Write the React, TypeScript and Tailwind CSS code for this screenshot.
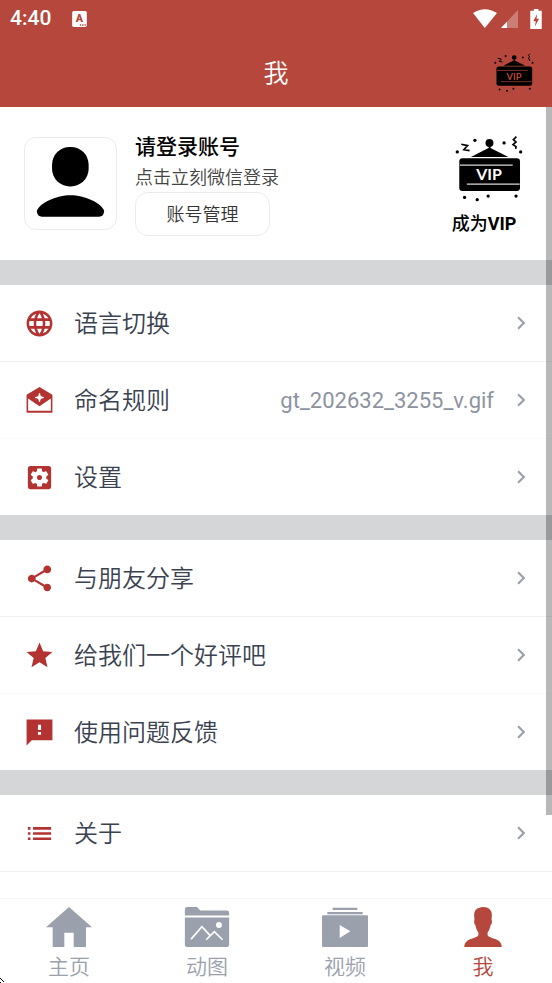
import type { ReactNode } from 'react';
import {
  MdChevronRight,
  MdLanguage,
  MdList,
  MdSettingsApplications,
  MdShare,
  MdStar,
} from 'react-icons/md';

function VipSign({ className, accent }: { className: string; accent: string }) {
  return (
    <svg viewBox="75 75 235 200" className={className} aria-hidden="true">
      <circle cx="209" cy="98" r="12" />
      <path d="M207 104 H212 V116 H207 Z" />
      <path d="M209 112 L266 140 H153 Z" />
      <rect x="118" y="144" width="183" height="99" rx="10" />
      <path d="M120 165 H279 M141 222 H300" stroke={accent} strokeWidth="4" opacity="0.85" />
      <text
        x="208"
        y="211"
        textAnchor="middle"
        fontSize="48"
        fontWeight="700"
        fill={accent}
        className="font-[Lato,sans-serif]"
      >
        VIP
      </text>
      <path
        d="M124 102 L143 106 L132 118 L149 121 M290 79 L281 88 L289 95 L280 103 L289 109 L288 116"
        fill="none"
        stroke="black"
        strokeWidth="5"
      />
      <circle cx="112" cy="125" r="5" />
      <circle cx="165" cy="90" r="5" />
      <circle cx="253" cy="98" r="5" />
      <circle cx="303" cy="125" r="5" />
      <circle cx="134" cy="262" r="5" />
      <circle cx="172" cy="269" r="5" />
      <circle cx="205" cy="258" r="5" />
      <circle cx="289" cy="258" r="5" />
    </svg>
  );
}

function NamingIcon() {
  return (
    <svg viewBox="0 0 24 24" className="size-[31px]" aria-hidden="true">
      <path d="M12 1.6 L22 7.6 V21.5 H2 V7.6 Z" fill="currentColor" />
      <path d="M3.2 10.4 L12 16.4 L20.8 10.4 V20 H3.2 Z" fill="white" />
      <path
        d="M12 6.2 L12.9 8.8 L15.5 9.7 L12.9 10.6 L12 13.2 L11.1 10.6 L8.5 9.7 L11.1 8.8 Z"
        fill="white"
        stroke="white"
        strokeWidth="0.4"
      />
    </svg>
  );
}

function FeedbackIcon() {
  return (
    <svg viewBox="0 0 24 24" className="size-[31px]" fill="currentColor" aria-hidden="true">
      <path
        fillRule="evenodd"
        d="M2 2 H22 V18 H6 L2 22 Z M10.8 6 V10 H13.2 V6 Z M10.8 11.6 V13.8 H13.2 V11.6 Z"
      />
    </svg>
  );
}

function StatusBar() {
  return (
    <div className="flex h-[37px] items-center px-[10px]">
      <span className="text-[21px] font-medium leading-none">4:40</span>
      <svg viewBox="0 0 44 48" className="ml-[21px] h-4 w-[15px]" aria-hidden="true">
        <rect width="44" height="48" rx="5" fill="white" />
        <text x="22" y="34" textAnchor="middle" fontSize="32" fontWeight="900" fill="#b5473c">
          A
        </text>
        <path d="M23 42 h4 M30 42 h4 M37 42 h4" stroke="#b5473c" strokeWidth="4" />
      </svg>
      <svg viewBox="219 26 71 56" className="ml-auto h-[19px] w-6" fill="white" aria-hidden="true">
        <path d="M219 38 Q254 15 290 38 L254 82 Z" />
      </svg>
      <svg viewBox="303 29 51 54" className="ml-1 h-[18px] w-[17px]" fill="white" aria-hidden="true">
        <path d="M354 29 V83 H303 Z" opacity="0.3" />
        <path d="M321 64 V83 H303 Z" />
      </svg>
      <svg viewBox="391 23 35 61" className="ml-3 h-5 w-3" aria-hidden="true">
        <path d="M402 23 H416 V28 H426 V84 H391 V28 H402 Z" fill="white" />
        <path d="M412 38 L400 60 H408 L405 76 L418 53 H410 Z" fill="#b5473c" />
      </svg>
    </div>
  );
}

function Row({ icon, label, value }: { icon: ReactNode; label: string; value?: string }) {
  return (
    <li className="border-b border-[#f0f1f3] last:border-b-0 even:border-[#fafafb]">
      <button
        type="button"
        className="flex h-[76px] w-full items-center pl-6 pr-[18px] text-left text-2xl text-[#3a4250]"
      >
        <span className="mr-[19px] text-[31px] text-[#b33332]">{icon}</span>
        <span className="pt-0.5 font-[350]">{label}</span>
        <span className="ml-auto mr-3.5 pt-0.5 text-[22px] text-[#8c939f]">{value}</span>
        <MdChevronRight className="text-[26px] text-[#9aa1ac]" />
      </button>
    </li>
  );
}

function Gap() {
  return <div className="h-[25px] bg-[#d4d6d8]" />;
}

function Tab({ label, active, children }: { label: string; active?: boolean; children: ReactNode }) {
  return (
    <button
      type="button"
      aria-current={active ? 'page' : undefined}
      className={`flex flex-1 flex-col items-center pt-2 ${active ? 'text-[#b5473c]' : 'text-[#9aa1ac]'}`}
    >
      {children}
      <span className="mt-[5px] text-[21px] font-[350] leading-[31px]">{label}</span>
    </button>
  );
}

export default function App() {
  return (
    <div className="relative flex h-screen flex-col overflow-hidden bg-white font-[Roboto,'Noto_Sans_CJK_SC',sans-serif]">
      <header className="bg-[#b5473c] text-white">
        <StatusBar />
        <div className="grid h-[70px] grid-cols-[1fr_auto_1fr] items-center px-[18px]">
          <h1 className="col-start-2 pt-1 text-[25px] font-[350]">我</h1>
          <button type="button" aria-label="VIP" className="justify-self-end">
            <VipSign className="h-[39px] w-[46px]" accent="#b5473c" />
          </button>
        </div>
      </header>

      <main className="relative min-h-0 flex-1 overflow-hidden">
        <section className="flex items-center py-6 pl-6 pr-[29px]">
          <div className="size-[93px] rounded-xl border border-[#ebebeb]">
            <svg viewBox="74 84 276 276" className="size-full" aria-hidden="true">
              <rect x="156" y="111" width="111" height="120" rx="54" />
              <path d="M110 305 C120 280 170 258 212 258 C254 258 304 280 314 305 Q314 323 298 323 H126 Q110 323 110 305 Z" />
            </svg>
          </div>
          <div className="ml-[18px] flex flex-col items-start">
            <h2 className="text-[21px] font-medium leading-[33px] text-black">请登录账号</h2>
            <p className="text-lg font-[350] leading-7 text-[#444]">点击立刻微信登录</p>
            <button
              type="button"
              className="h-11 w-[135px] rounded-[13px] border border-[#ebebeb] pt-0.5 text-lg font-[350] text-[#333]"
            >
              账号管理
            </button>
          </div>
          <button type="button" className="ml-auto flex flex-col items-center self-end">
            <VipSign className="h-[67px] w-[78px]" accent="white" />
            <span className="mt-2.5 text-lg font-medium leading-6 text-black">
              成为<b>VIP</b>
            </span>
          </button>
        </section>
        <Gap />
        <ul>
          <Row icon={<MdLanguage />} label="语言切换" />
          <Row icon={<NamingIcon />} label="命名规则" value="gt_202632_3255_v.gif" />
          <Row icon={<MdSettingsApplications />} label="设置" />
        </ul>
        <Gap />
        <ul>
          <Row icon={<MdShare />} label="与朋友分享" />
          <Row icon={<MdStar />} label="给我们一个好评吧" />
          <Row icon={<FeedbackIcon />} label="使用问题反馈" />
        </ul>
        <Gap />
        <ul className="border-b border-[#f0f1f3]">
          <Row icon={<MdList />} label="关于" />
        </ul>
        <div className="absolute right-0 top-0 h-[89.5%] w-1.5 bg-black/28" />
      </main>

      <nav className="flex h-[85px] border-t border-[#f3f4f5]">
        <Tab label="主页">
          <svg viewBox="137 380 138 120" className="h-10 w-[46px]" fill="currentColor" aria-hidden="true">
            <path d="M206 380 L275 441 H257 V500 H220 V457 H192 V500 H157 V441 H137 Z" />
          </svg>
        </Tab>
        <Tab label="动图">
          <svg viewBox="552 380 137 122" className="h-10 w-[46px]" fill="currentColor" aria-hidden="true">
            <path d="M553 406 V387 Q553 380 560 380 H590 L600 391 H681 Q688 391 688 398 V406 Z" />
            <path d="M553 412 H688 V495 Q688 502 681 502 H560 Q553 502 553 495 Z" />
            <circle cx="657" cy="435" r="9" fill="white" />
            <path
              d="M572 478 L605 440 L631 468 M618 480 L643 455 L668 480"
              fill="none"
              stroke="white"
              strokeWidth="5"
            />
          </svg>
        </Tab>
        <Tab label="视频">
          <svg viewBox="138 380 138 120" className="h-10 w-[46px]" fill="currentColor" aria-hidden="true">
            <path d="M170 382 H244 V389 H170 Z M154 395 H260 V402 H154 Z" />
            <rect x="138" y="405" width="138" height="95" rx="3" />
            <path d="M191 434 L223 453 L191 473 Z" fill="white" />
          </svg>
        </Tab>
        <Tab label="我" active>
          <svg viewBox="555 379 138 122" className="h-10 w-[46px]" fill="currentColor" aria-hidden="true">
            <path d="M624 379 C641 379 652 388 651 405 L650 418 C653 422 651 432 647 435 C645 446 642 452 638 457 V465 C644 474 662 474 672 482 C679 488 681 494 681 501 H567 C567 494 569 488 576 482 C586 474 604 474 610 465 V457 C606 452 603 446 601 435 C597 432 596 422 598 418 L597 405 C597 390 603 384 612 382 C616 380 620 379 624 379 Z" />
          </svg>
        </Tab>
      </nav>

      <svg viewBox="0 0 4 5" className="absolute bottom-0 left-0 h-[5px] w-1" aria-hidden="true">
        <path d="M0 0 h1 v1 h1 v1 h1 v1 h1 v1 h-1 v-1 h-1 v-1 h-1 v-1 h-1 Z M0 4 h1 v1 h-1 Z" />
      </svg>
    </div>
  );
}
